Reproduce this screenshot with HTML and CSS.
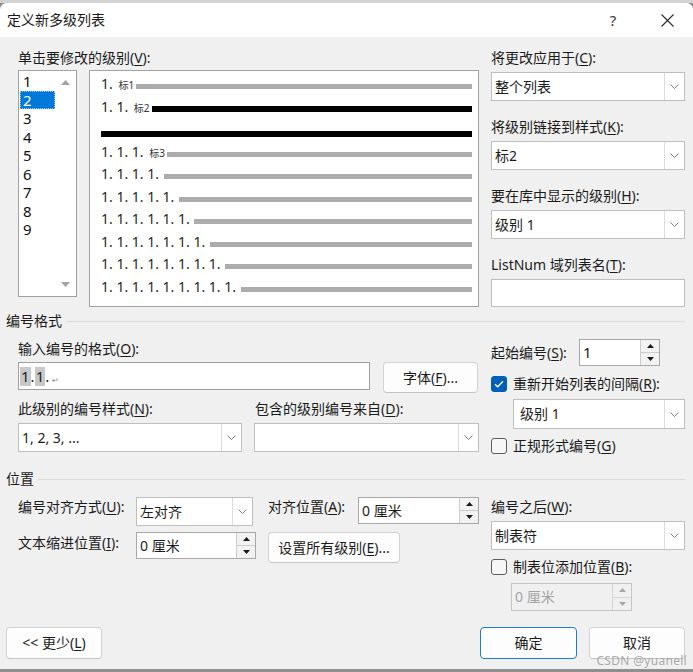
FILE: index.html
```html
<!DOCTYPE html>
<html lang="zh-CN">
<head>
<meta charset="utf-8">
<title>定义新多级列表</title>
<link rel="stylesheet" href="styles.css">
</head>
<body>
<div class="topstrip"></div>
<div class="dialog">
  <div class="titlebar">
    <span class="title">定义新多级列表</span>
    <span class="help">?</span>
    <span class="close"><svg width="13" height="13" viewBox="0 0 13 13"><path d="M.5.5 12.5 12.5M12.5.5.5 12.5" stroke="#2b2b2b" stroke-width="1.1" fill="none"/></svg></span>
  </div>

  <div class="content">
    <div class="top">
      <div class="levels-col">
        <div class="label lbl-list">单击要修改的级别(<u>V</u>):</div>
        <div class="levels-row">
          <div class="levellist">
            <div class="items">
              <div class="item">1</div>
              <div class="item sel">2</div>
              <div class="item">3</div>
              <div class="item">4</div>
              <div class="item">5</div>
              <div class="item">6</div>
              <div class="item">7</div>
              <div class="item">8</div>
              <div class="item">9</div>
            </div>
            <div class="vscroll">
              <svg width="9" height="5" viewBox="0 0 9 5"><polygon points="0,5 4.5,0 9,5" fill="#a3a3a3"/></svg>
              <svg width="9" height="5" viewBox="0 0 9 5"><polygon points="0,0 4.5,5 9,0" fill="#a3a3a3"/></svg>
            </div>
          </div>
          <div class="preview">
            <div class="prow"><span class="num">1. </span><span class="tag">标1</span><span class="bar gray"></span></div>
            <div class="prow"><span class="num">1. 1. </span><span class="tag">标2</span><span class="bar black"></span></div>
            <div class="prow solo"><span class="bar black"></span></div>
            <div class="prow"><span class="num">1. 1. 1. </span><span class="tag">标3</span><span class="bar gray"></span></div>
            <div class="prow"><span class="num">1. 1. 1. 1. </span><span class="bar gray wide"></span></div>
            <div class="prow"><span class="num">1. 1. 1. 1. 1. </span><span class="bar gray wide"></span></div>
            <div class="prow"><span class="num">1. 1. 1. 1. 1. 1. </span><span class="bar gray wide"></span></div>
            <div class="prow"><span class="num">1. 1. 1. 1. 1. 1. 1. </span><span class="bar gray wide"></span></div>
            <div class="prow"><span class="num">1. 1. 1. 1. 1. 1. 1. 1. </span><span class="bar gray wide"></span></div>
            <div class="prow"><span class="num">1. 1. 1. 1. 1. 1. 1. 1. 1. </span><span class="bar gray wide"></span></div>
          </div>
        </div>
      </div>

      <div class="right-col">
        <div class="field">
          <div class="label">将更改应用于(<u>C</u>):</div>
          <div class="combo"><span class="ctext">整个列表</span><span class="drop"><svg width="9" height="5" viewBox="0 0 9 5"><path d="M.5.5 4.5 4.5 8.5.5" fill="none" stroke="#7d7d7d"/></svg></span></div>
        </div>
        <div class="field">
          <div class="label">将级别链接到样式(<u>K</u>):</div>
          <div class="combo"><span class="ctext">标2</span><span class="drop"><svg width="9" height="5" viewBox="0 0 9 5"><path d="M.5.5 4.5 4.5 8.5.5" fill="none" stroke="#7d7d7d"/></svg></span></div>
        </div>
        <div class="field">
          <div class="label">要在库中显示的级别(<u>H</u>):</div>
          <div class="combo"><span class="ctext">级别 1</span><span class="drop"><svg width="9" height="5" viewBox="0 0 9 5"><path d="M.5.5 4.5 4.5 8.5.5" fill="none" stroke="#7d7d7d"/></svg></span></div>
        </div>
        <div class="field last">
          <div class="label">ListNum 域列表名(<u>T</u>):</div>
          <div class="textinput"></div>
        </div>
      </div>
    </div>

    <div class="sechead first"><span>编号格式</span><span class="rule"></span></div>
    <div class="sec sec2">
      <div class="s-left">
        <div class="label">输入编号的格式(<u>O</u>):</div>
        <div class="fmt-row">
          <div class="fmt-input"><span class="hl">1</span><span class="dot">.</span><span class="hl">1</span><span class="dot">.</span><span class="para">↵</span></div>
          <div class="btn font-btn">字体(<u>F</u>)...</div>
        </div>
        <div class="two-col">
          <div class="col c1">
            <div class="label">此级别的编号样式(<u>N</u>):</div>
            <div class="combo"><span class="ctext">1, 2, 3, ...</span><span class="drop"><svg width="9" height="5" viewBox="0 0 9 5"><path d="M.5.5 4.5 4.5 8.5.5" fill="none" stroke="#7d7d7d"/></svg></span></div>
          </div>
          <div class="col c2">
            <div class="label">包含的级别编号来自(<u>D</u>):</div>
            <div class="combo"><span class="ctext"></span><span class="drop"><svg width="9" height="5" viewBox="0 0 9 5"><path d="M.5.5 4.5 4.5 8.5.5" fill="none" stroke="#7d7d7d"/></svg></span></div>
          </div>
        </div>
      </div>
      <div class="s-right">
        <div class="start-row">
          <span class="label start-lbl">起始编号(<u>S</u>):</span>
          <div class="spin start-spin"><span class="stext">1</span><span class="spinbtns"><span class="sb"><svg width="7" height="4" viewBox="0 0 7 4"><polygon points="0,4 3.5,0 7,4" fill="#1a1a1a"/></svg></span><span class="sb"><svg width="7" height="4" viewBox="0 0 7 4"><polygon points="0,0 3.5,4 7,0" fill="#1a1a1a"/></svg></span></span></div>
        </div>
        <div class="cbrow r1"><span class="cb on"><svg width="10" height="8" viewBox="0 0 10 8"><path d="M1 4.2 3.7 6.8 9 1.2" fill="none" stroke="#fff" stroke-width="1.3"/></svg></span><span>重新开始列表的间隔(<u>R</u>):</span></div>
        <div class="combo restart-combo"><span class="ctext">级别 1</span><span class="drop"><svg width="9" height="5" viewBox="0 0 9 5"><path d="M.5.5 4.5 4.5 8.5.5" fill="none" stroke="#7d7d7d"/></svg></span></div>
        <div class="cbrow r2"><span class="cb"></span><span>正规形式编号(<u>G</u>)</span></div>
      </div>
    </div>

    <div class="sechead second"><span>位置</span><span class="rule"></span></div>
    <div class="sec sec3">
      <div class="s-left">
        <div class="prow3 row1">
          <span class="label p-lbl">编号对齐方式(<u>U</u>):</span>
          <div class="combo align-combo"><span class="ctext">左对齐</span><span class="drop"><svg width="9" height="5" viewBox="0 0 9 5"><path d="M.5.5 4.5 4.5 8.5.5" fill="none" stroke="#7d7d7d"/></svg></span></div>
          <span class="label a-lbl">对齐位置(<u>A</u>):</span>
          <div class="spin at-spin"><span class="stext">0 厘米</span><span class="spinbtns"><span class="sb"><svg width="7" height="4" viewBox="0 0 7 4"><polygon points="0,4 3.5,0 7,4" fill="#1a1a1a"/></svg></span><span class="sb"><svg width="7" height="4" viewBox="0 0 7 4"><polygon points="0,0 3.5,4 7,0" fill="#1a1a1a"/></svg></span></span></div>
        </div>
        <div class="prow3 row2">
          <span class="label p-lbl">文本缩进位置(<u>I</u>):</span>
          <div class="spin indent-spin"><span class="stext">0 厘米</span><span class="spinbtns"><span class="sb"><svg width="7" height="4" viewBox="0 0 7 4"><polygon points="0,4 3.5,0 7,4" fill="#1a1a1a"/></svg></span><span class="sb"><svg width="7" height="4" viewBox="0 0 7 4"><polygon points="0,0 3.5,4 7,0" fill="#1a1a1a"/></svg></span></span></div>
          <div class="btn all-btn">设置所有级别(<u>E</u>)...</div>
        </div>
      </div>
      <div class="s-right">
        <div class="label after-lbl">编号之后(<u>W</u>):</div>
        <div class="combo"><span class="ctext">制表符</span><span class="drop"><svg width="9" height="5" viewBox="0 0 9 5"><path d="M.5.5 4.5 4.5 8.5.5" fill="none" stroke="#7d7d7d"/></svg></span></div>
        <div class="cbrow r3"><span class="cb"></span><span>制表位添加位置(<u>B</u>):</span></div>
        <div class="spin disabled tab-spin"><span class="stext">0 厘米</span><span class="spinbtns"><span class="sb"><svg width="7" height="4" viewBox="0 0 7 4"><polygon points="0,4 3.5,0 7,4" fill="#a8a8a8"/></svg></span><span class="sb"><svg width="7" height="4" viewBox="0 0 7 4"><polygon points="0,0 3.5,4 7,0" fill="#a8a8a8"/></svg></span></span></div>
      </div>
    </div>

    <div class="footer">
      <div class="btn less-btn">&lt;&lt; 更少(<u>L</u>)</div>
      <div class="btn ok-btn">确定</div>
      <div class="btn cancel-btn">取消</div>
    </div>
  </div>
  <div class="watermark">CSDN @yuanell</div>
</div>
</body>
</html>
```

FILE: styles.css
```css
* { box-sizing: border-box; }
html, body { margin: 0; padding: 0; }
body {
  width: 693px;
  height: 672px;
  overflow: hidden;
  background: #8f8f8f;
  font-family: "Noto Sans", "Noto Sans CJK SC", sans-serif;
  font-size: 14px;
  color: #1b1b1b;
}
u { text-decoration: underline; text-underline-offset: 2px; }

.topstrip { height: 3px; background: #d3d3d3; }

.dialog {
  position: relative;
  height: 666px;
  background: #f0f0f0;
  border-radius: 7px 7px 0 0;
  overflow: hidden;
}

.titlebar {
  height: 34px;
  background: #fff;
  display: flex;
  align-items: center;
  padding-left: 7px;
}
.title { flex: 1; font-size: 14px; line-height: 18px; color: #1a1a1a; }
.help { width: 14px; text-align: center; margin-right: 40px; font-size: 15px; line-height: 18px; color: #3a3a3a; }
.close { width: 14px; height: 14px; margin-right: 19px; display: flex; align-items: center; justify-content: center; }

.content { padding: 12px 8px 0 6px; }

.label { height: 18px; line-height: 18px; white-space: nowrap; }

/* ---------- top area ---------- */
.top { display: flex; gap: 12px; padding-left: 12px; }
.levels-col { width: 461px; }
.lbl-list { margin-bottom: 3px; }
.levels-row { display: flex; gap: 12px; }

.levellist {
  width: 59px;
  height: 227px;
  background: #fff;
  border: 1px solid #a2a2a2;
  display: flex;
}
.items { width: 36px; padding: 1px 0 0 1px; }
.item { height: 18.5px; line-height: 18.5px; font-size: 15px; padding-left: 3px; color: #111; }
.item.sel { background: #0078d7; color: #fff; outline: 1px dotted #9cc8ee; outline-offset: -1px; }
.vscroll {
  flex: 1;
  display: flex;
  flex-direction: column;
  justify-content: space-between;
  align-items: center;
  padding: 9px 0 9px 0;
}

.preview {
  width: 390px;
  height: 237px;
  background: #fff;
  border: 1px solid #a2a2a2;
  padding: 2px 6px 0 11px;
}
.prow {
  display: flex;
  align-items: baseline;
  height: 22.5px;
  line-height: 22.5px;
  font-size: 14px;
  color: #262626;
  white-space: pre;
}
.prow.solo { align-items: flex-end; padding-bottom: 4px; }
.tag { font-size: 10px; margin-left: 2px; color: #333; }
.bar { flex: 1; margin-left: 2px; }
.bar.wide { margin-left: 1px; }
.bar.gray { height: 5px; background: #acacac; }
.bar.black { height: 6px; background: #000; }
.prow.solo .bar { margin-left: 0; }

.right-col { width: 194px; }
.field { margin-bottom: 17px; }
.field.last { margin-bottom: 0; }
.field .label { margin-bottom: 5px; }

.combo {
  display: flex;
  height: 29px;
  background: #fff;
  border: 1px solid #bfbfbf;
}
.ctext { flex: 1; padding-left: 3px; line-height: 27px; white-space: nowrap; overflow: hidden; }
.drop {
  width: 20px;
  border-left: 1px solid #dcdcdc;
  display: flex;
  align-items: center;
  justify-content: center;
}
.textinput { height: 28px; background: #fff; border: 1px solid #bfbfbf; }

/* ---------- section heads ---------- */
.sechead { display: flex; align-items: center; gap: 4px; height: 18px; line-height: 18px; }
.sechead .rule { flex: 1; height: 1px; background: #dadada; }
.sechead.first { margin-top: 5px; }
.sechead.second { margin-top: 15px; }

.sec { display: flex; gap: 12px; padding-left: 12px; }
.s-left { width: 461px; }
.s-right { width: 194px; }

/* ---------- numbering format ---------- */
.sec2 .s-left { padding-top: 10px; }
.sec2 .s-left > .label { margin-bottom: 4px; }
.fmt-row { display: flex; align-items: flex-start; gap: 13px; }
.fmt-input {
  width: 352px;
  height: 28px;
  background: #fff;
  border: 1px solid #a0a0a0;
  display: flex;
  align-items: center;
  padding-left: 1px;
  font-size: 15px;
}
.hl { background: #c8c8c8; line-height: 19px; padding: 0 1px; color: #222; }
.dot { line-height: 19px; color: #222; }
.para { font-size: 8px; color: #8a8a8a; margin-left: 3px; margin-top: 6px; }

.btn {
  display: flex;
  align-items: center;
  justify-content: center;
  background: #fdfdfd;
  border: 1px solid #d3d3d3;
  border-bottom-color: #c3c3c3;
  border-radius: 4px;
  white-space: nowrap;
  line-height: 16px;
}
.font-btn { width: 95px; height: 31px; }

.two-col { display: flex; gap: 12px; margin-top: 7px; }
.col .label { margin-bottom: 5px; }
.c1 { width: 224px; }
.c2 { width: 225px; }
.c2 .label { padding-left: 1px; }

.sec2 .s-right { padding-top: 9px; }
.start-row { display: flex; align-items: center; height: 27px; }
.start-lbl { width: 88px; }

.spin {
  display: flex;
  height: 27px;
  background: #fff;
  border: 1px solid #a8a8a8;
}
.stext { flex: 1; padding-left: 3px; line-height: 25px; white-space: nowrap; }
.spinbtns { width: 19px; display: flex; flex-direction: column; }
.sb {
  flex: 1;
  background: #f2f2f2;
  border-left: 1px solid #cdcdcd;
  display: flex;
  align-items: center;
  justify-content: center;
}
.sb + .sb { border-top: 1px solid #cdcdcd; }
.start-spin { width: 81px; }
.start-spin .stext { font-size: 15px; }

.cbrow { display: flex; align-items: center; gap: 6px; height: 18px; line-height: 18px; white-space: nowrap; }
.cb {
  width: 16px;
  height: 16px;
  flex: none;
  border-radius: 3px;
  border: 1px solid #5c5c5c;
  background: #f6f6f6;
}
.cb.on {
  background: #005fb8;
  border-color: #005fb8;
  display: flex;
  align-items: center;
  justify-content: center;
}
.cbrow.r1 { margin-top: 9px; }
.restart-combo { height: 30px; margin: 6px 0 0 22px; }
.restart-combo .ctext { line-height: 28px; padding-left: 6px; }
.cbrow.r2 { margin-top: 8px; }

/* ---------- position ---------- */
.sec3 .s-left { padding-top: 9px; }
.prow3 { display: flex; align-items: flex-start; }
.row2 { margin-top: 6px; }
.p-lbl { width: 118px; }
.row1 .label { margin-top: 1px; }
.row2 .p-lbl { margin-top: 2px; }
.align-combo { width: 117px; }
.a-lbl { width: 90px; margin-left: 15px; }
.at-spin { width: 121px; }
.indent-spin { width: 120px; }
.all-btn { width: 132px; height: 31px; margin-left: 12px; }

.sec3 .s-right { padding-top: 10px; }
.after-lbl { margin-bottom: 5px; }
.cbrow.r3 { margin-top: 8px; }
.tab-spin { width: 121px; height: 28px; margin: 7px 0 0 20px; }
.spin.disabled { background: #f0f0f0; border-color: #c6c6c6; color: #a3a3a3; }
.spin.disabled .stext { line-height: 26px; }
.spin.disabled .sb { background: #f0f0f0; border-color: #d6d6d6; }

/* ---------- footer ---------- */
.footer { display: flex; margin-top: 16px; }
.footer .btn { height: 32px; }
.less-btn { width: 96px; }
.ok-btn { width: 97px; margin-left: auto; border-color: #1f7ad0; }
.cancel-btn { width: 96px; margin-left: 12px; }

.watermark {
  position: absolute;
  right: 6px;
  bottom: 1px;
  font-size: 12px;
  line-height: 14px;
  color: rgba(150, 150, 150, 0.8);
  letter-spacing: 0.3px;
}
```
